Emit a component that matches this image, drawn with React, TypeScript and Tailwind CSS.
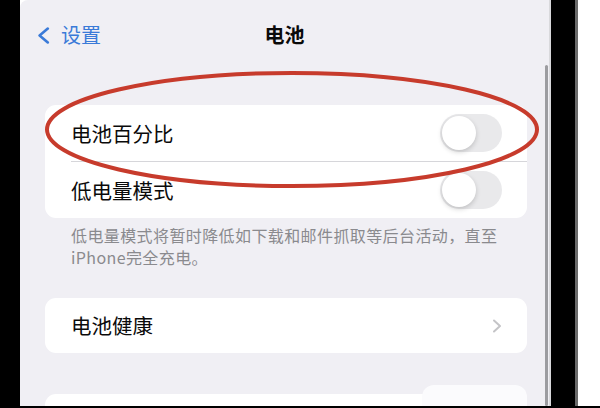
const BLUE = 'text-[#3a7ad8]';

function Toggle() {
  return (
    <div className="h-[38px] w-[62px] rounded-full bg-[#e9e9eb] p-[2px]">
      <div className="h-[34px] w-[34px] rounded-full bg-white shadow-[0_2px_5px_rgba(0,0,0,0.18)]" />
    </div>
  );
}

function BackChevron() {
  return (
    <svg width="13" height="17" viewBox="0 0 13 17" fill="none">
      <path d="M10.8 1.6 L2.6 8.5 L10.8 15.4" stroke="#3a7ad8" strokeWidth="2.6" strokeLinecap="round" strokeLinejoin="round" />
    </svg>
  );
}

function RowChevron() {
  return (
    <svg width="10" height="14" viewBox="0 0 10 14" fill="none">
      <path d="M2 1.5 L8 7 L2 12.5" stroke="#c4c4c7" strokeWidth="2" strokeLinecap="round" strokeLinejoin="round" />
    </svg>
  );
}

export default function App() {
  return (
    <div className="relative flex h-[408px] w-[600px] flex-col overflow-hidden bg-white font-['Noto_Sans_CJK_SC','Noto_Sans',sans-serif]">
      <div className="flex min-h-0 flex-1">
        {/* left bezel */}
        <div className="w-[20px] bg-black" />

        {/* screen */}
        <div className="relative w-[529px] overflow-hidden rounded-tl-[8px] bg-[#f0eff4]">
          {/* nav bar */}
          <div className="grid h-[70px] grid-cols-[1fr_auto_1fr] items-center">
            <div className={`flex items-center gap-[11px] pl-[17px] ${BLUE}`}>
              <BackChevron />
              <span className="text-[20px] leading-none">设置</span>
            </div>
            <div className="text-[20px] font-semibold leading-none text-[#0a0a0a]">电池</div>
            <div />
          </div>

          {/* battery percentage / low power */}
          <div className="ml-[25px] mt-[35px] w-[482px] rounded-[11px] bg-white">
            <div className="flex h-[56px] items-center justify-between pl-[26px] pr-[25px]">
              <span className="text-[20.5px] text-[#0a0a0a]">电池百分比</span>
              <Toggle />
            </div>
            <div className="ml-[26px] h-px bg-[#d6d6da]" />
            <div className="flex h-[56px] items-center justify-between pl-[26px] pr-[25px]">
              <span className="text-[20.5px] text-[#0a0a0a]">低电量模式</span>
              <Toggle />
            </div>
          </div>

          <p className="ml-[51px] pt-[6px] text-[16px] leading-[22px] tracking-[0.4px] text-[#8a8a8e]">
            低电量模式将暂时降低如下载和邮件抓取等后台活动，直至
            <br />
            iPhone完全充电。
          </p>

          {/* battery health */}
          <div className="ml-[25px] mt-[30px] flex h-[55px] w-[482px] items-center justify-between rounded-[11px] bg-white pl-[26px] pr-[25px]">
            <span className="text-[20.5px] text-[#0a0a0a]">电池健康</span>
            <RowChevron />
          </div>

          {/* next card, cut off */}
          <div className="ml-[25px] mt-[41px] h-[30px] w-[482px] rounded-t-[11px] bg-white" />

          {/* faint overlay blob near bottom right */}
          <div className="absolute left-[402px] top-[385px] h-[30px] w-[105px] rounded-t-[12px] bg-[#fbfbfd]" />

          {/* scroll indicator */}
          <div className="absolute bottom-0 right-[1px] top-[65px] w-[3px] rounded-full bg-[#9c9ca0]" />
        </div>

        {/* right bezel */}
        <div className="w-[2px] bg-[#d9d9dc]" />
        <div className="w-[24px] bg-black" />
        <div className="w-[3px] bg-[#6a6a6a]" />
        <div className="flex-1 bg-white" />
      </div>
      <div className="h-[2px] bg-black" />

      {/* red hand-drawn highlight */}
      <svg className="pointer-events-none absolute inset-0" width="600" height="408" viewBox="0 0 600 408" fill="none">
        <ellipse cx="292" cy="129.5" rx="245" ry="56.5" stroke="#c73b2c" strokeWidth="4" />
      </svg>
    </div>
  );
}
